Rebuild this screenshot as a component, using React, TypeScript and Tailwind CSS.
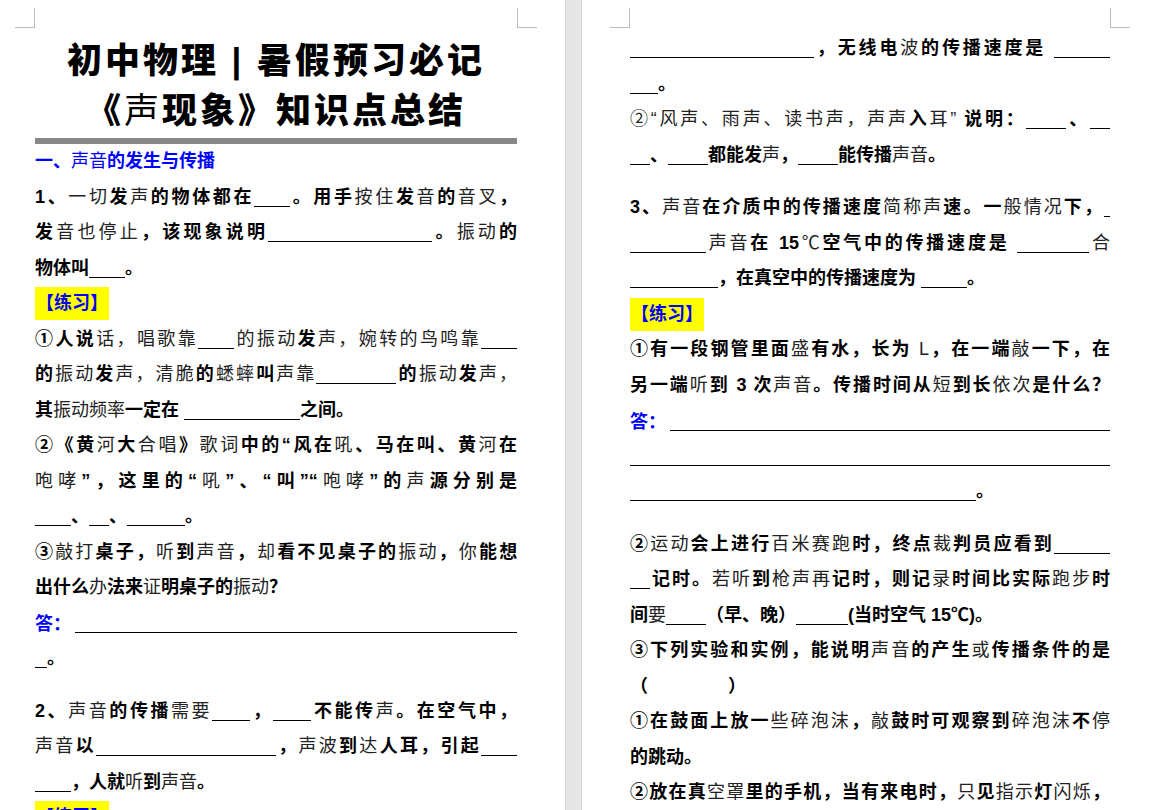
import React from 'react';

const FONT = { fontFamily: '"Liberation Sans", "Noto Sans CJK SC", sans-serif' };

// markup: [..] = normal weight, _N = blank of N px, ~N = empty space of N px, rest bold
function Rich({ s }: { s: string }) {
  const parts = s.split(/(\[[^\]]*\]|_\d+|~\d+)/).filter(Boolean);
  return (
    <>
      {parts.map((p, i) => {
        if (p.startsWith('[')) return <span key={i} className="font-normal text-[#222]">{p.slice(1, -1)}</span>;
        if (/^_\d+$/.test(p))
          return <span key={i} className="inline-block border-b border-black h-[20px] align-[-4px]" style={{ width: Number(p.slice(1)) }} />;
        if (/^~\d+$/.test(p)) return <span key={i} className="inline-block h-[20px]" style={{ width: Number(p.slice(1)) }} />;
        return <span key={i}>{p}</span>;
      })}
    </>
  );
}

function L({ s, j, gap }: { s: string; j?: boolean; gap?: boolean }) {
  return (
    <div className={`h-[35.5px] leading-[35.5px] whitespace-nowrap overflow-hidden ${j ? '[text-align-last:justify]' : ''} ${gap ? 'mt-[17px]' : ''}`}>
      <Rich s={s} />
    </div>
  );
}

function Tag() {
  return (
    <div className="h-[35.5px] flex items-center">
      <span className="bg-[#ffff00] text-[#0000ff] px-[1px] h-[33px] leading-[33px]">【练习】</span>
    </div>
  );
}

function Answer({ rest }: { rest?: boolean }) {
  return (
    <div className="h-[35.5px] flex items-end pb-[8px]">
      {!rest && <span className="text-[#0000ff] leading-none mr-1">答：</span>}
      <span className="flex-1 border-b border-black" />
    </div>
  );
}

function Marks() {
  return (
    <>
      <div className="absolute left-[15px] top-[8px] w-[20px] h-[20px] border-r border-b border-[#bbb]" />
      <div className="absolute right-[28px] top-[8px] w-[20px] h-[20px] border-l border-b border-[#bbb]" />
    </>
  );
}

export default function App() {
  return (
    <div className="w-[1166px] h-[810px] overflow-hidden flex bg-white text-black text-[18px] font-bold" style={FONT}>
      <div className="relative w-[565px] h-full">
        <Marks />
        <div className="pl-[35px] pr-[48px] pt-[36px]">
          <div className="text-center text-[35px] font-black leading-[50px] tracking-[3px] whitespace-nowrap">初中物理 | 暑假预习必记</div>
          <div className="text-center text-[35px] font-black leading-[50px] tracking-[3px] whitespace-nowrap">《<span className="font-normal">声</span>现象》知识点总结</div>
          <div className="h-[6px] bg-[#888] mt-[2px]" />
          <div className="h-[35.5px] leading-[35.5px] text-[#0000ff]">一、<span className="font-normal">声音</span>的发生与传播</div>
          <L j s="1、[一切]发[声]的物体都在_36。用手[按住]发[音]的[音叉]，" />
          <L j s="发[音也停止]，该现象说明_164。[振动]的" />
          <L s="物体叫_36。" />
          <Tag />
          <L j s="①人说[话，唱歌靠]_36[的振动]发[声，婉转的鸟鸣靠]_36" />
          <L j s="的[振动]发[声，清脆]的[蟋蟀]叫[声靠]_80的[振动]发[声，]" />
          <L s="其[振动频率]一定在 _116之间。" />
          <L j s="②《黄[河]大[合唱]》[歌词]中的“风在[吼]、马在叫、黄[河]在" />
          <L j s="[咆哮]”，这里的“[吼]”、“叫”“[咆哮]”的[声]源分别是" />
          <L s="_36、_20、_58。" />
          <L j s="③[敲打]桌子，[听]到[声音]，[却]看不见桌子的[振动]，[你]能想" />
          <L s="出什么[办]法来[证]明桌子的[振动]？" />
          <Answer />
          <L s="_12。" />
          <L j gap s="2、[声音]的传播[需要]_38，_38不能传[声]。在空气中，" />
          <L j s="[声音]以_180，[声波]到[达]人耳，引起_36" />
          <L s="_36，人就[听]到[声音]。" />
          <Tag />
        </div>
      </div>
      <div className="w-[17px] h-full bg-[#e6e6e6] border-x border-[#d4d4d4]" />
      <div className="relative flex-1 h-full">
        <div className="absolute left-[28px] top-[8px] w-[20px] h-[20px] border-r border-b border-[#bbb]" />
        <div className="absolute left-[528px] top-[8px] w-[20px] h-[20px] border-l border-b border-[#bbb]" />
        <div className="pl-[48px] pr-[56px] pt-[31px]">
          <L j s="_184，无线电[波]的传播速度是 _56" />
          <L s="_28。" />
          <L j s="[②“风声、雨声、读书声，声声]入[耳”] 说明：_40、_20" />
          <L s="_20、_40都能发[声]，_40能传播[声音]。" />
          <L j gap s="3、[声音]在介质中的传播速度[简称声]速。一[般情况]下，_6" />
          <L j s="_76[声音]在 15[℃]空气中的传播速度是 _72[合]" />
          <L s="_88，在真空中的传播速度为 _46。" />
          <Tag />
          <L j s="①有一段钢管里面[盛]有水，长为 [L]，在一端[敲]一下，在" />
          <L j s="另一端[听]到 3 次[声音]。传播时间从[短]到长[依次]是什么？" />
          <Answer />
          <Answer rest />
          <L s="_346。" />
          <L j gap s="②[运动]会上进行[百米赛跑]时，终点[裁]判员应看到_56" />
          <L j s="_20记时。[若听]到[枪声再]记时，则记[录]时间比实际[跑步]时" />
          <L s="间[要]_40（早、晚）_52(当时空气 15℃)。" />
          <L j s="③下列实验和实例，能说明[声音]的产生[或]传播条件的是" />
          <L s="（~80）" />
          <L j s="①在鼓面上放一[些碎泡沫]，[敲]鼓时可观察到[碎泡沫]不[停]" />
          <L s="的跳动。" />
          <L j s="②放在真[空罩]里的手机，当有来电时，[只]见[指示]灯[闪烁]，" />
          <L s="听不见铃声；" />
        </div>
      </div>
    </div>
  );
}
